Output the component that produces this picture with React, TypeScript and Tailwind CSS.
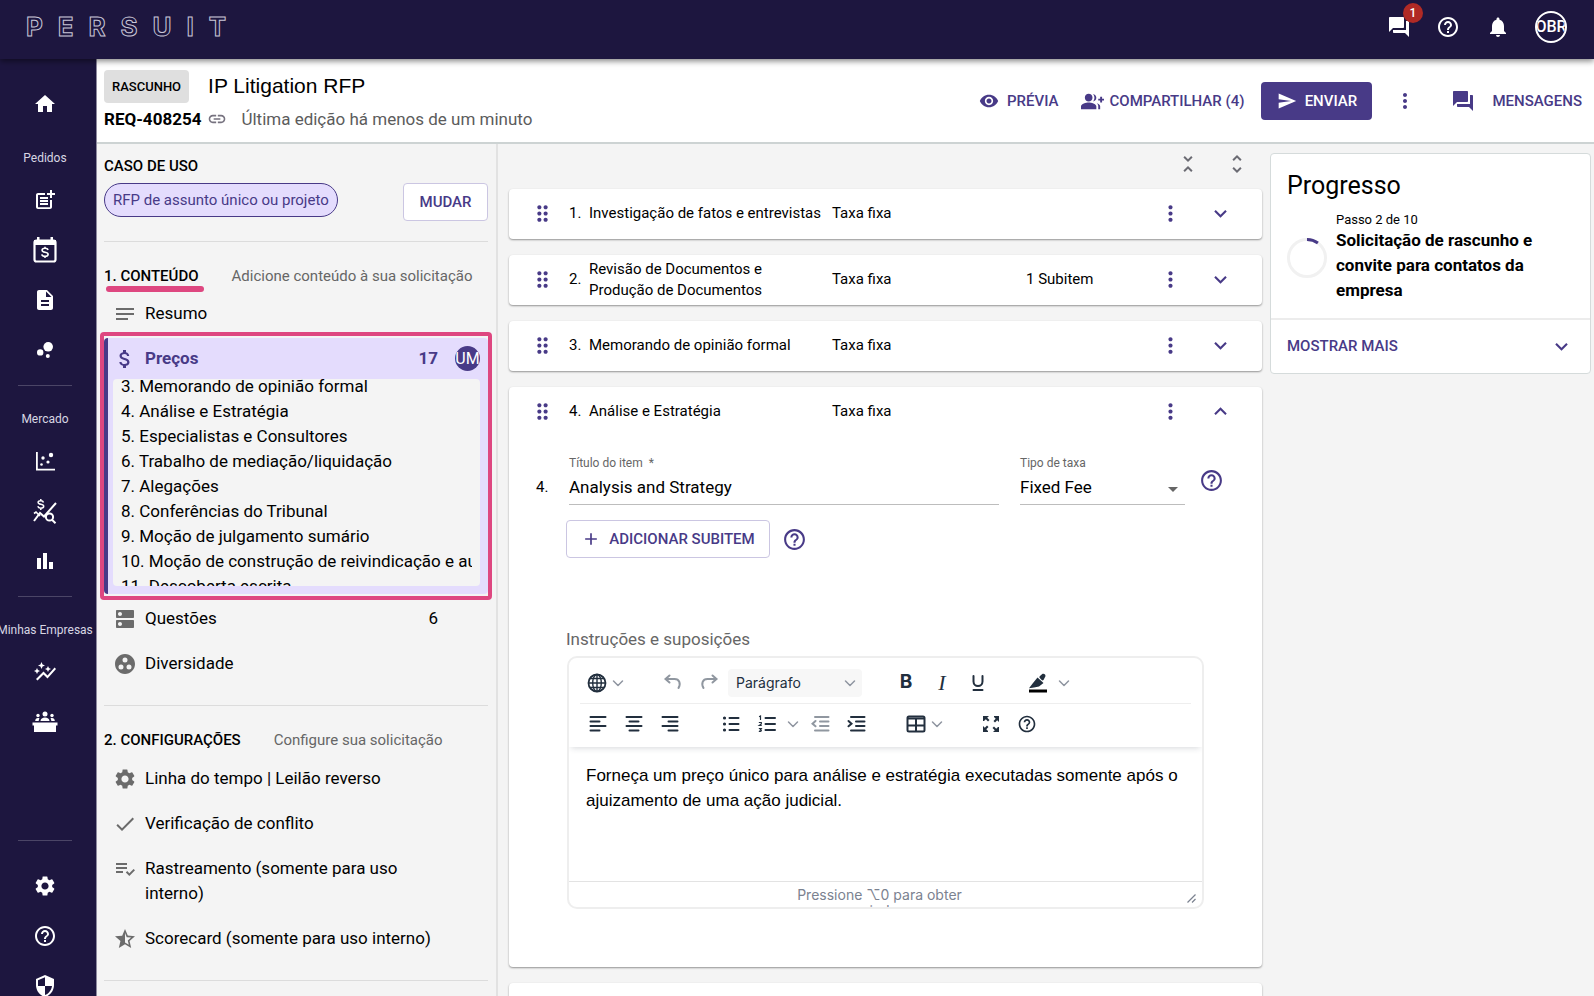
import type { ReactNode } from "react";
import {
  MdAdd,
  MdArrowDropDown,
  MdAttachMoney,
  MdBarChart,
  MdBubbleChart,
  MdCheck,
  MdDescription,
  MdDns,
  MdDragIndicator,
  MdExpandLess,
  MdExpandMore,
  MdForum,
  MdGroupAdd,
  MdGroupWork,
  MdHelpOutline,
  MdHome,
  MdLink,
  MdMoreVert,
  MdNotes,
  MdNotifications,
  MdOutlineAutoGraph,
  MdPlaylistAddCheck,
  MdPostAdd,
  MdSecurity,
  MdSend,
  MdSettings,
  MdStarHalf,
  MdUnfoldLess,
  MdUnfoldMore,
  MdVisibility,
} from "react-icons/md";

interface PriceItem {
  number: string;
  title: string;
  subitems?: string;
}

const priceItems: PriceItem[] = [
  { number: "1.", title: "Investigação de fatos e entrevistas" },
  { number: "2.", title: "Revisão de Documentos e Produção de Documentos", subitems: "1 Subitem" },
  { number: "3.", title: "Memorando de opinião formal" },
];

const outline = [
  "3. Memorando de opinião formal",
  "4. Análise e Estratégia",
  "5. Especialistas e Consultores",
  "6. Trabalho de mediação/liquidação",
  "7. Alegações",
  "8. Conferências do Tribunal",
  "9. Moção de julgamento sumário",
  "10. Moção de construção de reivindicação e audiência",
  "11. Descoberta escrita",
];

function CalendarMoneyIcon() {
  return (
    <svg width="26" height="28" viewBox="0 0 26 28" fill="none">
      <rect x="2.5" y="4.5" width="21" height="21" rx="2" stroke="currentColor" strokeWidth="2.2" />
      <path d="M2 4h22v5H2zM5 1h2.5v4H5zM18.500 1H21v4h-2.500z" fill="currentColor" />
      <path
        d="M16 14c-.3-1.200-1.400-1.800-3-1.800-1.700 0-2.900.7-2.900 2 0 2.900 6 1.200 6 4.100 0 1.400-1.300 2.100-3.100 2.100-1.700 0-2.900-.7-3.200-2M13 10.800v1.500M13 20.500V22"
        stroke="currentColor"
        strokeWidth="1.600"
      />
    </svg>
  );
}

function ScatterIcon() {
  return (
    <svg width="22" height="22" viewBox="0 0 22 22" fill="currentColor">
      <path d="M2 2h1.800v16.700H21v1.800H2z" />
      <circle cx="17" cy="5" r="2.200" />
      <circle cx="9" cy="8" r="1.700" />
      <circle cx="14" cy="12" r="1.600" />
      <circle cx="7.500" cy="14.500" r="1.300" />
    </svg>
  );
}

function MoneySearchIcon() {
  return (
    <svg width="26" height="28" viewBox="0 0 26 28" fill="none" stroke="currentColor">
      <path d="M2 24l6-8 4 3.500L24 6" strokeWidth="2" />
      <path d="M2 16.500l2-1.500 4 4" strokeWidth="1.600" />
      <circle cx="17.500" cy="20" r="3.600" strokeWidth="2" />
      <path d="M20 22.800l3.500 3.500" strokeWidth="2" />
      <path
        d="M11.500 5.500C11.200 4.300 10 3.700 8.700 3.700c-1.500 0-2.600.7-2.600 1.800 0 2.500 5.600 1.200 5.600 3.800 0 1.300-1.200 1.900-2.900 1.900-1.600 0-2.700-.7-3-1.900M8.800 2v2M8.800 11v2"
        strokeWidth="1.500"
      />
    </svg>
  );
}

function PanelIcon() {
  return (
    <svg width="26" height="22" viewBox="0 0 26 22" fill="currentColor">
      <circle cx="13" cy="3" r="2.500" />
      <circle cx="6" cy="4.500" r="1.700" />
      <circle cx="20" cy="4.500" r="1.700" />
      <path d="M8.500 10c0-2.300 2-3.500 4.500-3.500s4.500 1.200 4.500 3.500zM3.200 10c0-1.900 1.200-3 2.800-3 .6 0 1 .1 1.500.4-.6.8-.8 1.600-.8 2.600zM22.800 10c0-1.900-1.200-3-2.800-3-.6 0-1 .1-1.500.4.6.8.8 1.600.8 2.600zM.5 11.500h25v3h-1.500V21H2v-6.500H.5z" />
    </svg>
  );
}

function Stroke({ d, className = "" }: { d: string; className?: string }) {
  return (
    <svg width="20" height="20" viewBox="0 0 20 20" fill="none" stroke="currentColor" strokeWidth="2" strokeLinecap="round" className={className}>
      <path d={d} />
    </svg>
  );
}

function Caret() {
  return (
    <svg width="12" height="8" viewBox="0 0 12 8" fill="none" stroke="#8f95a0" strokeWidth="1.500" strokeLinecap="round" strokeLinejoin="round">
      <path d="M1.500 2L6 6.500 10.500 2" />
    </svg>
  );
}

function GlobeIcon() {
  return (
    <svg width="20" height="20" viewBox="0 0 20 20" fill="none" stroke="currentColor" strokeWidth="1.400">
      <circle cx="10" cy="10" r="8.500" strokeWidth="1.800" />
      <ellipse cx="10" cy="10" rx="4.300" ry="8.500" />
      <path d="M10 1.500v17M1.500 10h17M3 5.500h14M3 14.500h14" />
    </svg>
  );
}

function ToolButton({ label, children }: { label: string; children: ReactNode }) {
  return (
    <button type="button" aria-label={label} className="flex h-8 w-9 shrink-0 items-center justify-center text-[#222f3e]">
      {children}
    </button>
  );
}

function NavLabel({ children }: { children: ReactNode }) {
  return <div className="flex justify-center pt-[23px] pr-1.5 pb-[7px] text-[12px] leading-5 whitespace-nowrap text-[#d8d6e3]">{children}</div>;
}

function NavButton({ label, children }: { label: string; children: ReactNode }) {
  return (
    <a href="#" aria-label={label} className="flex h-[50px] items-center justify-center pr-1.5 text-[24px] text-white">
      {children}
    </a>
  );
}

function NavDivider() {
  return <hr className="mt-2.5 mr-6 ml-[18px] border-[#4b4566]" />;
}

function Sidebar() {
  return (
    <nav className="w-[97px] shrink-0 overflow-hidden border-r border-[#8e8a9f] bg-[#1d163f] pt-5">
      <NavButton label="Início"><MdHome /></NavButton>
      <div className="-mt-1"><NavLabel>Pedidos</NavLabel></div>
      <NavButton label="Novo pedido"><MdPostAdd /></NavButton>
      <NavButton label="Agenda de preços"><CalendarMoneyIcon /></NavButton>
      <NavButton label="Documentos"><MdDescription /></NavButton>
      <NavButton label="Grupos"><MdBubbleChart /></NavButton>
      <NavDivider />
      <NavLabel>Mercado</NavLabel>
      <NavButton label="Dispersão"><ScatterIcon /></NavButton>
      <NavButton label="Análise de preços"><MoneySearchIcon /></NavButton>
      <NavButton label="Relatórios"><MdBarChart /></NavButton>
      <NavDivider />
      <NavLabel>Minhas Empresas</NavLabel>
      <NavButton label="Tendências"><MdOutlineAutoGraph /></NavButton>
      <NavButton label="Painel"><PanelIcon /></NavButton>
      <div className="h-[83px]" />
      <NavDivider />
      <div className="pt-5">
        <NavButton label="Configurações"><MdSettings /></NavButton>
        <NavButton label="Ajuda"><MdHelpOutline /></NavButton>
        <NavButton label="Segurança"><MdSecurity /></NavButton>
      </div>
    </nav>
  );
}

function TopBar() {
  return (
    <header className="relative z-10 flex h-[59px] shrink-0 items-center justify-between bg-[#1d163f] pr-[27px] pb-1.5 pl-[26px] shadow-[0_2px_6px_rgba(0,0,0,0.5)]">
      <a href="#" aria-label="PERSUIT" className="flex w-[200px] justify-between font-[Inter,sans-serif] text-[26px] leading-8 font-bold text-[#1d163f] [-webkit-text-stroke:1px_#c9c6d8]">
        {"PERSUIT".split("").map((letter, i) => (
          <span key={i}>{letter}</span>
        ))}
      </a>
      <div className="flex items-center text-[24px] text-white">
        <button type="button" aria-label="Mensagens" className="relative mr-[25px]">
          <MdForum />
          <span className="absolute -top-3 -right-3 flex h-5 w-5 items-center justify-center rounded-full bg-[#b02a25] text-[12px] font-medium">1</span>
        </button>
        <button type="button" aria-label="Ajuda" className="mr-[26px]"><MdHelpOutline /></button>
        <button type="button" aria-label="Notificações" className="mr-[25px]"><MdNotifications /></button>
        <button type="button" className="flex h-8 w-8 items-center justify-center overflow-hidden rounded-full border-2 border-white text-[16px] font-medium">
          OBR
        </button>
      </div>
    </header>
  );
}

function RequestHeader() {
  return (
    <div className="flex h-[85px] shrink-0 items-center justify-between border-b-2 border-[#cdd3d3] bg-white pr-3 pl-[7px]">
      <div>
        <div className="flex items-center gap-[19px]">
          <span className="flex h-[33px] items-center rounded bg-[#dfdfdf] px-2 text-[13px] font-medium">RASCUNHO</span>
          <h1 className="pb-0.5 font-['Liberation_Sans',sans-serif] text-[21px] leading-7">IP Litigation RFP</h1>
        </div>
        <div className="mt-1 flex items-center text-[17px] leading-6">
          <span className="font-bold">REQ-408254</span>
          <MdLink className="ml-1.5 text-[20px] text-[#76727f]" />
          <span className="ml-3.5 text-[#5c5c5c]">Última edição há menos de um minuto</span>
        </div>
      </div>
      <div className="flex items-center pt-px text-[15px] font-medium text-[#483a87]">
        <button type="button" className="flex items-center gap-2">
          <MdVisibility className="text-[20px]" />
          PRÉVIA
        </button>
        <button type="button" className="ml-[22px] flex items-center gap-1.5">
          <MdGroupAdd className="text-[23px]" />
          COMPARTILHAR (4)
        </button>
        <button type="button" className="ml-[17px] flex h-[38px] w-[111px] items-center justify-center gap-2 rounded bg-[#483a87] text-white">
          <MdSend className="text-[20px]" />
          ENVIAR
        </button>
        <button type="button" aria-label="Mais opções" className="ml-[21px] text-[24px]"><MdMoreVert /></button>
        <button type="button" className="ml-[34px] flex items-center gap-[17px]">
          <MdForum className="text-[24px]" />
          MENSAGENS
        </button>
      </div>
    </div>
  );
}

function SectionItem({ icon, label, count }: { icon: ReactNode; label: string; count?: string }) {
  return (
    <a href="#" className="flex py-2.5 pr-[50px] pl-[9px] text-[17px] leading-[25px]">
      <span className="flex h-[25px] w-8 shrink-0 items-center text-[24px] text-[#6b6b6b]">{icon}</span>
      <span className="flex-1">{label}</span>
      {count && <span>{count}</span>}
    </a>
  );
}

function SectionTitle({ title, hint }: { title: string; hint: string }) {
  return (
    <div className="flex items-center gap-[33px] leading-6">
      <h2 className="text-[15px] font-medium">{title}</h2>
      <span className="text-[15px] text-[#666]">{hint}</span>
    </div>
  );
}

function RequestPanel() {
  return (
    <aside className="w-[401px] shrink-0 overflow-hidden border-r-2 border-[#e2e2e2] pt-2.5 pr-2 pl-[7px]">
      <h2 className="text-[15px] leading-6 font-medium">CASO DE USO</h2>
      <div className="mt-[5px] flex items-start justify-between">
        <span className="flex h-[34px] items-center rounded-full border border-[#483a87] bg-[#e4dcfd] px-2 text-[15px] text-[#483a87]">
          RFP de assunto único ou projeto
        </span>
        <button type="button" className="h-[38px] w-[85px] rounded border border-[#cbc6e2] bg-white text-[15px] font-medium text-[#483a87]">
          MUDAR
        </button>
      </div>
      <hr className="mt-5 mb-[22px] border-[#dcdcdc]" />
      <SectionTitle title="1. CONTEÚDO" hint="Adicione conteúdo à sua solicitação" />
      <div className="-mt-0.5 ml-0.5 h-[6px] w-[98px] rounded-sm bg-[#de4780]" />
      <div className="-mt-px"><SectionItem icon={<MdNotes />} label="Resumo" /></div>

      <div className="-mx-1 -mt-1 rounded-sm border-4 border-[#de4780] py-0.5">
        <div className="rounded border-l-4 border-[#483a87] bg-[#e4dcfd] pr-2 pb-2 pl-[5px]">
          <a href="#" className="flex h-[41px] items-center text-[17px] font-bold text-[#483a87]">
            <MdAttachMoney className="mr-2 text-[24px]" />
            <span className="flex-1">Preços</span>
            <span className="mr-[17px]">17</span>
            <span className="flex h-[25px] w-[25px] items-center justify-center overflow-hidden rounded-full bg-[#483a87] text-[16px] font-normal text-white">UM</span>
          </a>
          <ul className="h-[207px] overflow-hidden rounded bg-[#f4f4f4] px-2 text-[17px] leading-[25px]">
            {outline.map((item, i) => (
              <li key={item} className={i === 0 ? "-mt-[5px] overflow-hidden whitespace-nowrap" : "overflow-hidden whitespace-nowrap"}>
                {item}
              </li>
            ))}
          </ul>
        </div>
      </div>

      <div className="-mt-1">
        <SectionItem icon={<MdDns />} label="Questões" count="6" />
        <SectionItem icon={<MdGroupWork />} label="Diversidade" />
      </div>
      <hr className="mt-[19px] mb-[22px] border-[#dcdcdc]" />
      <SectionTitle title="2. CONFIGURAÇÕES" hint="Configure sua solicitação" />
      <div className="mt-1">
        <SectionItem icon={<MdSettings />} label="Linha do tempo | Leilão reverso" />
        <SectionItem icon={<MdCheck />} label="Verificação de conflito" />
        <SectionItem icon={<MdPlaylistAddCheck />} label="Rastreamento (somente para uso interno)" />
        <SectionItem icon={<MdStarHalf />} label="Scorecard (somente para uso interno)" />
      </div>
      <hr className="mt-[19px] border-[#dcdcdc]" />
    </aside>
  );
}

function PriceRow({ item, open }: { item: PriceItem; open?: boolean }) {
  return (
    <div className="grid h-[50px] grid-cols-[60px_20px_243px_194px_1fr_auto] items-center pb-px text-[15px] leading-[21px]">
      <MdDragIndicator className="ml-[21px] text-[25px] text-[#483a87]" />
      <span>{item.number}</span>
      <span className="pr-2.5">{item.title}</span>
      <span>Taxa fixa</span>
      <span>{item.subitems}</span>
      <span className="flex gap-[25px] pr-[29px] text-[25px] text-[#483a87]">
        <button type="button" aria-label="Mais opções"><MdMoreVert /></button>
        <button type="button" aria-label={open ? "Recolher" : "Expandir"}>{open ? <MdExpandLess /> : <MdExpandMore />}</button>
      </span>
    </div>
  );
}

function Editor() {
  return (
    <div className="mx-[58px] overflow-hidden rounded-[10px] border-2 border-[#eee] bg-white">
      <div className="relative px-[11px] shadow-[0_3px_6px_-2px_rgba(34,47,62,0.18)]">
        <div className="flex h-[46px] items-center border-b border-[#eee] pt-1">
          <button type="button" aria-label="Idioma" className="mr-[31px] ml-[7px] flex items-center gap-[5px] text-[#222f3e]">
            <GlobeIcon />
            <Caret />
          </button>
          <ToolButton label="Desfazer"><Stroke className="text-[#9097a0]" d="M6.500 2.500L2.500 6l4 3.500M3 6h8.500c5 0 6.500 4.500 4 9" /></ToolButton>
          <ToolButton label="Refazer"><Stroke className="text-[#9097a0]" d="M13.500 2.500l4 3.500-4 3.500M17 6H8.500c-5 0-6.500 4.500-4 9" /></ToolButton>
          <button type="button" className="ml-px flex h-7 w-[134px] items-center justify-between rounded-sm bg-[#f7f7f7] pr-1.5 pl-2 font-[Inter,sans-serif] text-[14px] text-[#222f3e]">
            Parágrafo
            <Caret />
          </button>
          <div className="ml-[26px] flex">
            <ToolButton label="Negrito"><span className="font-[Inter,sans-serif] text-[19px] font-bold">B</span></ToolButton>
            <ToolButton label="Itálico"><span className="font-['Liberation_Serif',serif] text-[22px] italic">I</span></ToolButton>
            <ToolButton label="Sublinhado"><Stroke d="M5.500 3v5.500a4.500 4.500 0 0 0 9 0V3M5.500 17h9" /></ToolButton>
          </div>
          <button type="button" aria-label="Cor de realce" className="ml-8 flex items-center gap-2.5 text-[#222f3e]">
            <svg width="20" height="20" viewBox="0 0 20 20" fill="currentColor">
              <path d="M1 16.500h18v3H1z" fill="#000" />
              <path d="M9.500 4.500l6 5.500-4.500 3.500-5 1-5 .8 4-5.300zM12 3l2-1.800c1-.8 2.300-.6 3 .4.700.9.600 2-.2 2.800L15.500 7c-.6.600-1.200.600-1.800 0l-1.900-1.900c-.6-.7-.5-1.500.2-2.100z" />
            </svg>
            <Caret />
          </button>
        </div>
        <div className="flex h-[43px] items-center pb-1">
          <ToolButton label="Alinhar à esquerda"><Stroke d="M2.500 3h15M2.500 7.500h9M2.500 12h15M2.500 16.500h9" /></ToolButton>
          <ToolButton label="Centralizar"><Stroke d="M2.500 3h15M5.500 7.500h9M2.500 12h15M5.500 16.500h9" /></ToolButton>
          <ToolButton label="Alinhar à direita"><Stroke d="M2.500 3h15M8.500 7.500h9M2.500 12h15M8.500 16.500h9" /></ToolButton>
          <div className="ml-[25px] flex items-center">
            <ToolButton label="Marcadores">
              <svg width="20" height="20" viewBox="0 0 20 20" fill="none" stroke="currentColor" strokeLinecap="round">
                <path d="M8.500 4h9M8.500 10h9M8.500 16h9" strokeWidth="2" />
                <path d="M3.500 4h.01M3.500 10h.01M3.500 16h.01" strokeWidth="3.200" />
              </svg>
            </ToolButton>
            <button type="button" aria-label="Numeração" className="flex items-center gap-2.5 pr-1 pl-2 text-[#222f3e]">
              <svg width="20" height="20" viewBox="0 0 20 20" fill="none" stroke="currentColor" strokeLinecap="round">
                <path d="M8.500 4h9.500M8.500 10h9.500M8.500 16h9.500" strokeWidth="2" />
                <path d="M2.500 2.500l1-.5v3.500M2.300 8.500h2v1.500l-2 1.500h2M2.300 14.500h2l-1 1.300c1.800.2 1.200 2-1 1.500" strokeWidth="1.200" />
              </svg>
              <Caret />
            </button>
            <ToolButton label="Diminuir recuo"><Stroke className="text-[#9097a0]" d="M4 3h13.500M9 7.500h8.500M9 12h8.500M4 16.500h13.500M4.500 7L1.500 9.800l3 2.500" /></ToolButton>
            <ToolButton label="Aumentar recuo"><Stroke d="M4 3h13.500M9 7.500h8.500M9 12h8.500M4 16.500h13.500M1.500 7l3 2.800-3 2.500" /></ToolButton>
          </div>
          <button type="button" aria-label="Tabela" className="ml-[31px] flex items-center gap-[5px] text-[#222f3e]">
            <svg width="20" height="18" viewBox="0 0 20 18" fill="none" stroke="currentColor" strokeWidth="2">
              <rect x="1.500" y="1.500" width="17" height="15" rx="1.500" />
              <path d="M1 3.500h18M1 10.500h18M10 4v12" />
            </svg>
            <Caret />
          </button>
          <div className="ml-[30px] flex">
            <ToolButton label="Tela cheia">
              <svg width="20" height="20" viewBox="0 0 20 20" fill="currentColor">
                <path d="M2 2h6L6.200 3.800 8.500 6 7 7.500 4.800 5.200 3 7H2zM18 2v6l-1.800-1.800L14 8.500 12.500 7l2.200-2.200L13 3V2zM18 18h-6l1.800-1.800L11.500 14l1.500-1.500 2.200 2.200L17 13h1zM2 18v-6l1.800 1.800L6 11.500 7.500 13l-2.200 2.200L7 17v1z" />
              </svg>
            </ToolButton>
            <ToolButton label="Ajuda"><MdHelpOutline className="text-[20px]" /></ToolButton>
          </div>
        </div>
      </div>
      <p className="h-[134px] pt-4 pr-3 pl-[17px] font-['Liberation_Sans',sans-serif] text-[17px] leading-[25px]">
        Forneça um preço único para análise e estratégia executadas somente após o ajuizamento de uma ação judicial.
      </p>
      <div className="relative flex h-[26px] justify-center overflow-hidden border-t border-[#e3e3e3] pt-[5px] pr-3 font-[Inter,sans-serif] text-[14px] leading-4 text-[#7b8290]">
        <span className="w-[180px] text-center">Pressione ⌥0 para obter ajuda</span>
        <svg className="absolute right-1.5 bottom-1" width="9" height="9" viewBox="0 0 9 9" stroke="currentColor" strokeWidth="1.200">
          <path d="M0.500 8.500l8-8M5 8.500L8.500 5" />
        </svg>
      </div>
    </div>
  );
}

function PriceList() {
  return (
    <main className="min-w-0 flex-1 overflow-hidden pr-2 pl-[11px]">
      <div className="flex h-[45px] items-center justify-end gap-[25px] pr-[13px] pb-1.5 text-[24px] text-[#6b6b73]">
        <button type="button" aria-label="Recolher tudo"><MdUnfoldLess /></button>
        <button type="button" aria-label="Expandir tudo"><MdUnfoldMore /></button>
      </div>
      <div className="flex flex-col gap-4">
        {priceItems.map((item) => (
          <section key={item.number} className="rounded bg-white shadow-[0_1px_2px_rgba(0,0,0,0.4)]">
            <PriceRow item={item} />
          </section>
        ))}
        <section className="rounded bg-white pb-[58px] shadow-[0_1px_2px_rgba(0,0,0,0.4)]">
          <PriceRow item={{ number: "4.", title: "Análise e Estratégia" }} open />
          <div className="flex items-end pt-4 pr-[38px] pl-[27px]">
            <span className="w-[33px] pb-2 text-[15px] leading-5">4.</span>
            <label className="flex flex-1 flex-col text-[12px] leading-5 text-[#666]">
              <span>Título do item &nbsp;*</span>
              <input type="text" defaultValue="Analysis and Strategy" className="h-8 w-full border-b border-[#bdbdbd] pb-1 text-[17px] text-black outline-none" />
            </label>
            <label className="relative ml-[21px] flex w-[165px] flex-col text-[12px] leading-5 text-[#666]">
              <span>Tipo de taxa</span>
              <select className="h-8 w-full appearance-none border-b border-[#bdbdbd] bg-white pb-1 text-[17px] text-black outline-none">
                <option>Fixed Fee</option>
              </select>
              <MdArrowDropDown className="pointer-events-none absolute right-0 bottom-1 text-[24px]" />
            </label>
            <button type="button" aria-label="Ajuda sobre o tipo de taxa" className="mb-3 ml-3.5 text-[25px] text-[#483a87]">
              <MdHelpOutline />
            </button>
          </div>
          <div className="mt-[15px] ml-[57px] flex items-center gap-3">
            <button type="button" className="flex h-[38px] w-[204px] items-center justify-center gap-2 rounded border border-[#cbc6e2] text-[15px] font-medium text-[#483a87]">
              <MdAdd className="text-[20px]" />
              ADICIONAR SUBITEM
            </button>
            <button type="button" aria-label="Ajuda sobre subitens" className="text-[25px] text-[#483a87]"><MdHelpOutline /></button>
          </div>
          <h3 className="mt-[69px] mb-[5px] ml-[57px] text-[17px] leading-6 text-[#666]">Instruções e suposições</h3>
          <Editor />
        </section>
        <section className="h-[50px] rounded bg-white shadow-[0_1px_2px_rgba(0,0,0,0.4)]" />
      </div>
    </main>
  );
}

function ProgressCard() {
  return (
    <aside className="w-[324px] shrink-0 pt-[9px] pr-[3px]">
      <section className="rounded border border-[#d5dbdb] bg-white">
        <div className="border-b-2 border-[#ececec] px-4 pt-4 pb-[15px]">
          <h2 className="text-[25px] leading-8">Progresso</h2>
          <div className="mt-2.5 flex items-center">
            <svg width="40" height="40" viewBox="0 0 40 40" fill="none" strokeWidth="3" className="mr-[9px] shrink-0">
              <circle cx="20" cy="20" r="18.500" stroke="#f1f1f1" />
              <path d="M20 1.500a18.500 18.500 0 0 1 10.900 3.500" stroke="#483a87" />
            </svg>
            <div>
              <p className="text-[13px] leading-4">Passo 2 de 10</p>
              <p className="text-[17px] leading-[25px] font-bold">Solicitação de rascunho e convite para contatos da empresa</p>
            </div>
          </div>
        </div>
        <button type="button" className="flex h-[53px] w-full items-center justify-between px-4 text-[15px] font-medium text-[#483a87]">
          MOSTRAR MAIS
          <MdExpandMore className="text-[25px]" />
        </button>
      </section>
    </aside>
  );
}

export default function App() {
  return (
    <div className="flex h-screen flex-col overflow-hidden bg-[#f4f4f4] font-[Roboto,sans-serif] text-black">
      <TopBar />
      <div className="flex min-h-0 flex-1">
        <Sidebar />
        <div className="flex min-w-0 flex-1 flex-col">
          <RequestHeader />
          <div className="flex min-h-0 flex-1">
            <RequestPanel />
            <PriceList />
            <ProgressCard />
          </div>
        </div>
      </div>
    </div>
  );
}
